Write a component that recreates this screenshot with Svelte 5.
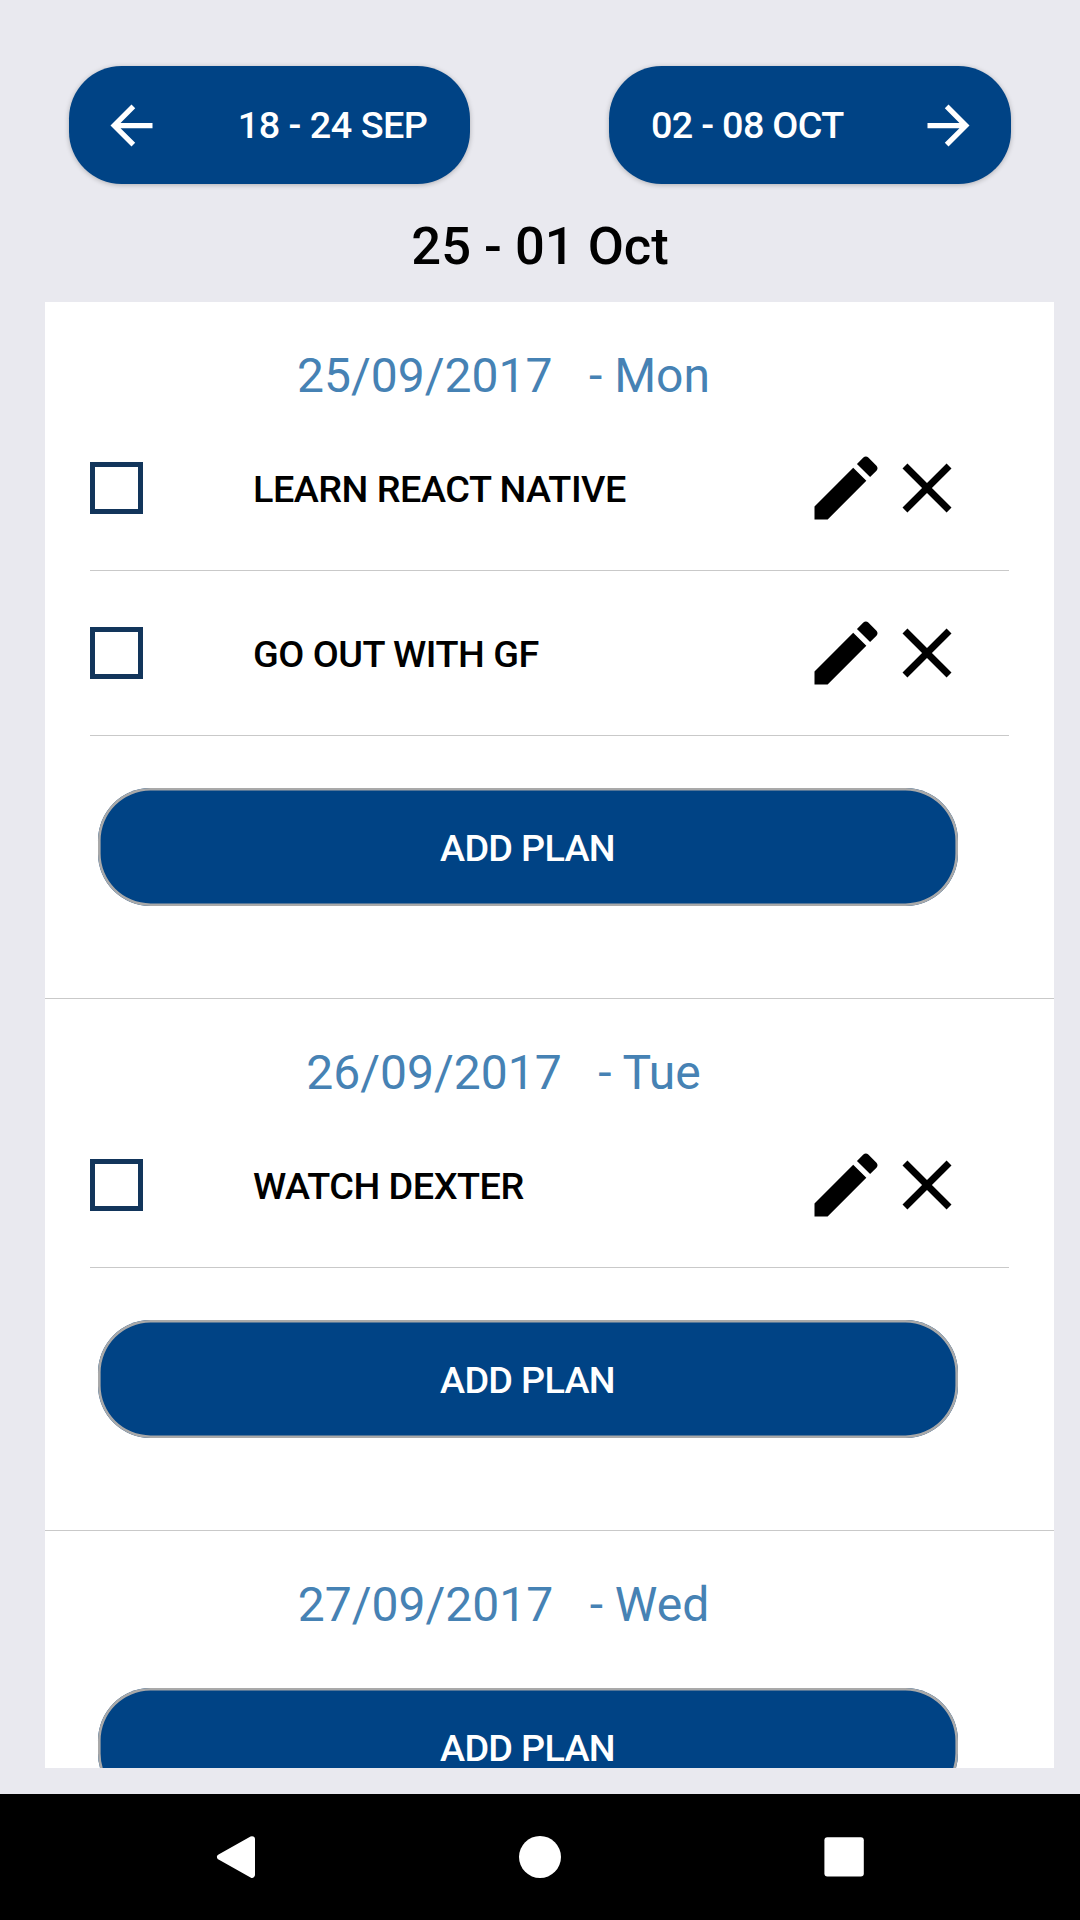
<script>
  const days = [
    { date: '25/09/2017', day: 'Mon', plans: ['LEARN REACT NATIVE', 'GO OUT WITH GF'] },
    { date: '26/09/2017', day: 'Tue', plans: ['WATCH DEXTER'] },
    { date: '27/09/2017', day: 'Wed', plans: [] }
  ];
</script>

<div class="screen">
  <header>
    <button class="week prev">
      <svg viewBox="0 0 24 24"><path d="M20 11H7.83l5.59-5.59L12 4l-8 8 8 8 1.41-1.41L7.83 13H20v-2z" /></svg>
      <span>18 - 24 SEP</span>
    </button>
    <button class="week next">
      <span>02 - 08 OCT</span>
      <svg viewBox="0 0 24 24"><path d="M12 4l-1.41 1.41L16.17 11H4v2h12.17l-5.58 5.59L12 20l8-8z" /></svg>
    </button>
  </header>
  <h1>25 - 01 Oct</h1>

  <main>
    {#each days as d}
      <section>
        <h2>{d.date}<span>- {d.day}</span></h2>
        {#each d.plans as plan}
          <div class="plan">
            <span class="check"></span>
            <span class="name">{plan}</span>
            <svg viewBox="0 0 24 24"><path d="M3 17.25V21h3.75L17.81 9.94l-3.75-3.75L3 17.25zM20.71 7.04c.39-.39.39-1.02 0-1.41l-2.34-2.34c-.39-.39-1.02-.39-1.41 0l-1.83 1.83 3.75 3.75 1.83-1.83z" /></svg>
            <svg class="close" viewBox="0 0 24 24"><path d="M19 6.41L17.59 5 12 10.59 6.41 5 5 6.41 10.59 12 5 17.59 6.41 19 12 13.41 17.59 19 19 17.59 13.41 12z" /></svg>
          </div>
        {/each}
        <button class="add">ADD PLAN</button>
      </section>
    {/each}
  </main>

  <nav>
    <svg viewBox="0 0 42 42"><path d="M38 3.2L6 21l32 17.8z" transform="translate(-1 0)" /></svg>
    <svg viewBox="0 0 42 42"><circle cx="21" cy="21" r="21" /></svg>
    <svg viewBox="0 0 42 42"><rect x="1.4" y="1.2" width="39.4" height="39.4" rx="3" /></svg>
  </nav>
</div>

<style>
  :global(body) { margin: 0; }
  .screen {
    width: 1080px;
    height: 1920px;
    box-sizing: border-box;
    display: flex;
    flex-direction: column;
    background: #e9e9ef;
    font-family: Roboto, "Liberation Sans", sans-serif;
    color: #000;
    overflow: hidden;
  }
  button {
    font: inherit;
    border: 0;
    margin: 0;
    background: #004385;
    color: #fff;
    border-radius: 52.5px;
    height: 118px;
    box-sizing: border-box;
  }
  header {
    display: flex;
    justify-content: space-between;
    padding: 66px 69px 0;
  }
  .week, .add, .name {
    font-size: 37.8px;
    font-weight: 500;
    letter-spacing: -0.5px;
    white-space: nowrap;
  }
  .week {
    display: flex;
    align-items: center;
    justify-content: space-between;
    width: 401px;
    line-height: 120px;
    box-shadow: 0 1px 5px rgba(0, 0, 0, 0.25);
  }
  .week.next { width: 402px; letter-spacing: -0.7px; }
  .prev { padding: 0 42.5px 0 31px; }
  .next { padding: 0 31.5px 0 42px; }
  .week svg { width: 63px; height: 63px; fill: #fff; }
  h1 {
    margin: 0;
    height: 118px;
    line-height: 124px;
    text-align: center;
    font-size: 52.5px;
    font-weight: 500;
  }
  main {
    height: 1466px;
    margin: 0 26px 0 45px;
    background: #fff;
    overflow: hidden;
  }
  section {
    padding: 0 45px 92px;
    border-bottom: 1px solid #c9c9c9;
  }
  h2 {
    display: flex;
    justify-content: center;
    gap: 36.5px;
    margin: 0 92px 0 0;
    height: 104px;
    line-height: 147px;
    font-size: 48px;
    font-weight: 400;
    color: #4682b4;
  }
  .plan {
    display: flex;
    align-items: center;
    height: 165px;
    box-sizing: border-box;
    padding-bottom: 1px;
    border-bottom: 1px solid #c9c9c9;
  }
  .check {
    width: 53px;
    height: 52px;
    box-sizing: border-box;
    border: 5px solid #12355b;
  }
  .name {
    width: 551px;
    margin-left: 110px;
    padding-top: 3px;
    line-height: 52px;
  }
  .plan svg { width: 84px; height: 84px; flex: none; }
  .plan .close { margin-left: -3px; }
  .add {
    display: block;
    width: 860px;
    margin: 52px 0 0 8px;
    line-height: 120px;
    padding: 0 1px 0 0;
    letter-spacing: -0.7px;
    box-shadow: inset 0 0 0 2.6px #a9a9a9;
  }
  h2 + .add { margin-top: 53px; }
  nav {
    display: flex;
    align-items: center;
    justify-content: space-between;
    height: 126px;
    margin-top: auto;
    padding: 0 215px;
    background: #000;
  }
  nav svg { width: 42px; height: 42px; fill: #fff; }
  nav path { stroke: #fff; stroke-width: 6; stroke-linejoin: round; }
</style>
